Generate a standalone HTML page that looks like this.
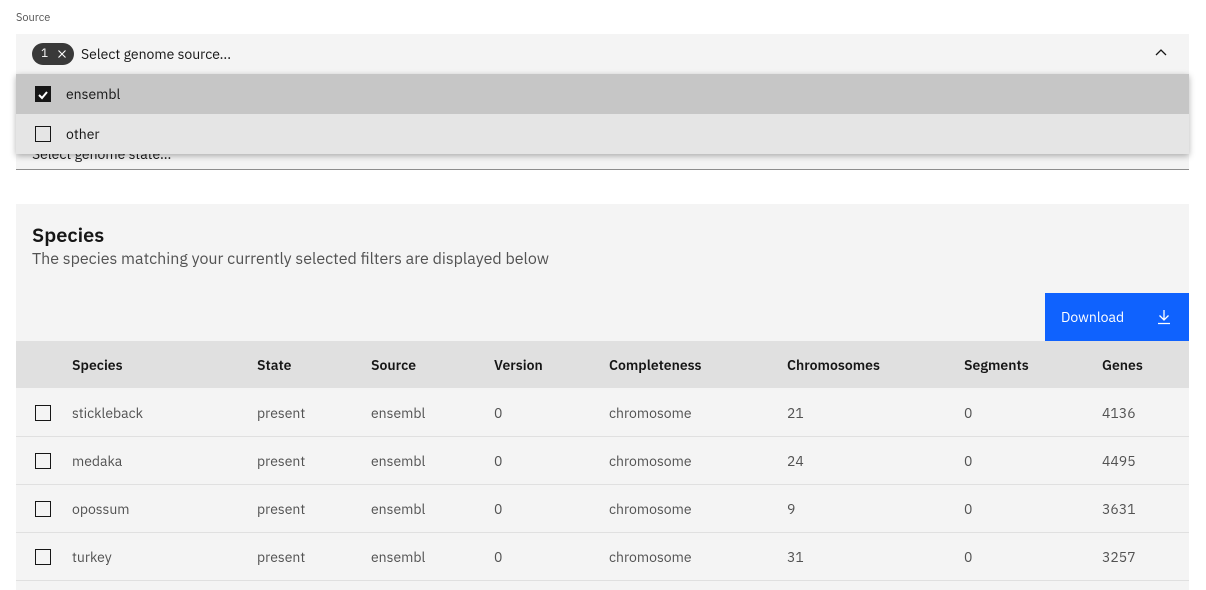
<!DOCTYPE html>
<html><head><style>
*{box-sizing:border-box;margin:0;padding:0}
body{width:1206px;height:590px;overflow:hidden;background:#fff;font-family:"IBM Plex Sans","Liberation Sans",sans-serif;color:#161616;position:relative}
.abs{position:absolute}
.cb{position:absolute;width:16px;height:16px;border:1px solid #161616;background:transparent}
.row{position:absolute;left:16px;width:1173px;height:48px;border-bottom:1px solid #e0e0e0;font-size:14px;color:#525252}
.row span,.hdr span{position:absolute;top:0;line-height:48px}
.hdr{position:absolute;left:16px;top:341px;width:1173px;height:47px;background:#e0e0e0;font-size:14px;font-weight:600;color:#161616}
</style></head><body>
<div class="abs" style="left:16px;top:11px;font-size:11px;color:#525252">Source</div>
<div class="abs" style="left:16px;top:34px;width:1173px;height:40px;background:#f4f4f4"></div>
<div class="abs" style="left:32px;top:43px;width:42px;height:22px;border-radius:11px;background:#393939;color:#fff;font-size:12px;line-height:22px;padding-left:9px">1
<svg style="position:absolute;left:26px;top:7px" width="8" height="8" viewBox="0 0 8 8"><path d="M0.5 0.5 L7.5 7.5 M7.5 0.5 L0.5 7.5" stroke="#fff" stroke-width="1.1"/></svg></div>
<div class="abs" style="left:81px;top:44px;font-size:14px;line-height:20px">Select genome source...</div>
<svg class="abs" style="left:1155px;top:49px" width="12" height="8" viewBox="0 0 12 8"><path d="M1 6 L6 1 L11 6" fill="none" stroke="#161616" stroke-width="1.3"/></svg>
<div class="abs" style="left:16px;top:116px;width:1173px;height:54px;background:#f4f4f4;border-bottom:1px solid #8d8d8d"></div>
<div class="abs" style="left:32px;top:145px;font-size:14px;color:#161616">Select genome state...</div>
<div class="abs" style="left:16px;top:74px;width:1173px;height:80px;box-shadow:0 2px 6px rgba(0,0,0,.3)">
<div style="height:40px;background:#c6c6c6;position:relative"><div class="cb" style="left:19px;top:12px;background:#161616"><svg width="14" height="14" viewBox="0 0 14 14"><path d="M3 7 L6 10 L11 4" fill="none" stroke="#fff" stroke-width="2"/></svg></div><span style="position:absolute;left:50px;top:11px;font-size:14px">ensembl</span></div>
<div style="height:40px;background:#e5e5e5;position:relative"><div class="cb" style="left:19px;top:12px"></div><span style="position:absolute;left:50px;top:11px;font-size:14px">other</span></div>
</div>
<div class="abs" style="left:16px;top:204px;width:1173px;height:386px;background:#f4f4f4"></div>
<div class="abs" style="left:32px;top:221px;font-size:20px;font-weight:600">Species</div>
<div class="abs" style="left:32px;top:249px;font-size:16px;color:#525252">The species matching your currently selected filters are displayed below</div>
<div class="abs" style="left:1045px;top:293px;width:144px;height:48px;background:#0f62fe;color:#fff;font-size:14px;line-height:48px;padding-left:16px">Download
<svg style="position:absolute;left:112px;top:16px" width="14" height="16" viewBox="0 0 14 16"><path d="M7 1 V11 M2.5 6.5 L7 11 L11.5 6.5 M1 14.5 H13" fill="none" stroke="#fff" stroke-width="1.3"/></svg></div>
<div class="hdr"><span style="left:56px">Species</span><span style="left:241px">State</span><span style="left:355px">Source</span><span style="left:478px">Version</span><span style="left:593px">Completeness</span><span style="left:771px">Chromosomes</span><span style="left:948px">Segments</span><span style="left:1086px">Genes</span></div>
<div class="row" style="top:389px"><div class="cb" style="left:19px;top:16px"></div><span style="left:56px">stickleback</span><span style="left:241px">present</span><span style="left:355px">ensembl</span><span style="left:478px">0</span><span style="left:593px">chromosome</span><span style="left:771px">21</span><span style="left:948px">0</span><span style="left:1086px">4136</span></div>
<div class="row" style="top:437px"><div class="cb" style="left:19px;top:16px"></div><span style="left:56px">medaka</span><span style="left:241px">present</span><span style="left:355px">ensembl</span><span style="left:478px">0</span><span style="left:593px">chromosome</span><span style="left:771px">24</span><span style="left:948px">0</span><span style="left:1086px">4495</span></div>
<div class="row" style="top:485px"><div class="cb" style="left:19px;top:16px"></div><span style="left:56px">opossum</span><span style="left:241px">present</span><span style="left:355px">ensembl</span><span style="left:478px">0</span><span style="left:593px">chromosome</span><span style="left:771px">9</span><span style="left:948px">0</span><span style="left:1086px">3631</span></div>
<div class="row" style="top:533px"><div class="cb" style="left:19px;top:16px"></div><span style="left:56px">turkey</span><span style="left:241px">present</span><span style="left:355px">ensembl</span><span style="left:478px">0</span><span style="left:593px">chromosome</span><span style="left:771px">31</span><span style="left:948px">0</span><span style="left:1086px">3257</span></div>
</body></html>
